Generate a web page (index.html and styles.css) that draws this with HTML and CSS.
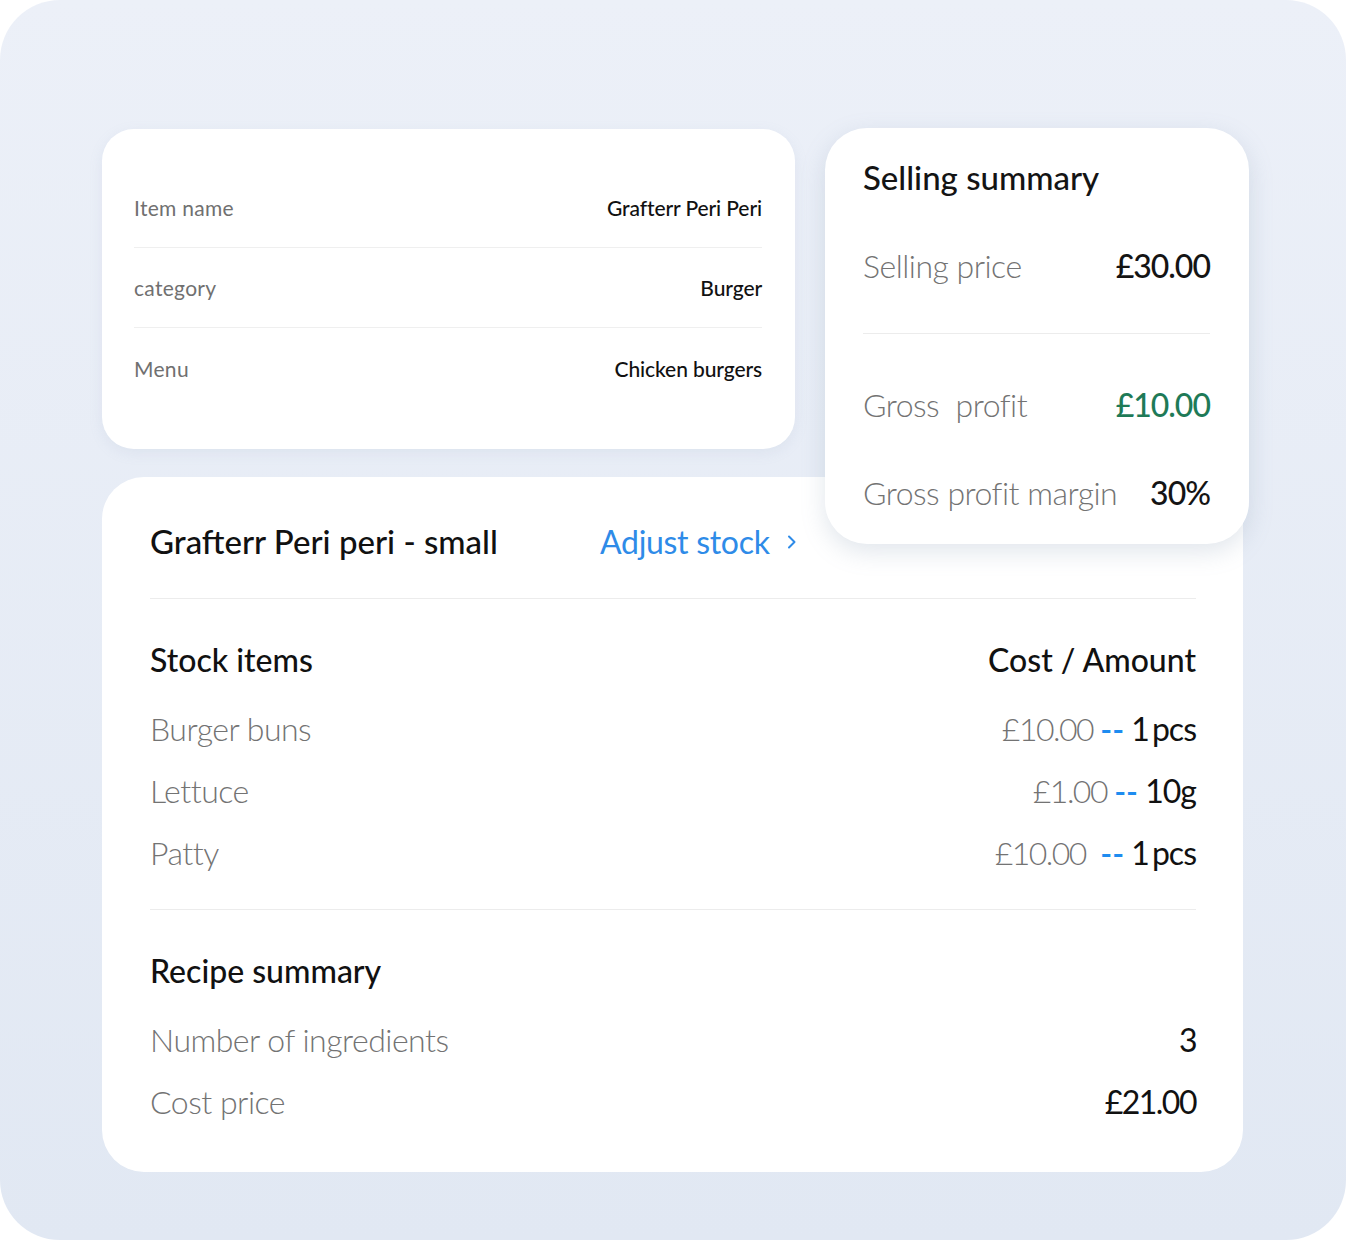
FILE: index.html
```html
<!DOCTYPE html>
<html lang="en">
<head>
<meta charset="utf-8">
<title>Item summary</title>
<link rel="stylesheet" href="styles.css">
</head>
<body>
<div class="panel">
  <div class="top-row">
    <section class="card info-card">
      <div class="info-row"><span class="info-label">Item name</span><span class="info-value">Grafterr Peri Peri</span></div>
      <div class="info-row"><span class="info-label">category</span><span class="info-value">Burger</span></div>
      <div class="info-row"><span class="info-label">Menu</span><span class="info-value">Chicken burgers</span></div>
    </section>
    <section class="card selling-card">
      <h2 class="selling-title">Selling summary</h2>
      <div class="sell-row sell-first"><span class="muted">Selling price</span><span class="strong">£30.00</span></div>
      <div class="sell-divider"></div>
      <div class="sell-row sell-gross"><span class="muted">Gross&nbsp; profit</span><span class="strong green">£10.00</span></div>
      <div class="sell-row sell-margin"><span class="muted">Gross profit margin</span><span class="strong">30%</span></div>
    </section>
  </div>
  <section class="card detail-card">
    <div class="detail-head">
      <h2 class="detail-title">Grafterr Peri peri - small</h2>
      <a class="adjust" href="#">Adjust stock
        <svg class="chev" width="12" height="16" viewBox="0 0 12 16"><path d="M3 2.5 L8.5 8 L3 13.5" fill="none" stroke="currentColor" stroke-width="2" stroke-linecap="round" stroke-linejoin="round"/></svg>
      </a>
    </div>
    <div class="detail-divider"></div>
    <div class="section-head"><h3>Stock items</h3><h3>Cost / Amount</h3></div>
    <div class="line"><span class="muted">Burger buns</span><span class="amount"><span class="muted num">£10.00</span> <span class="dash">--</span> 1&#8201;pcs</span></div>
    <div class="line"><span class="muted">Lettuce</span><span class="amount"><span class="muted num">£1.00</span> <span class="dash">--</span> 10g</span></div>
    <div class="line"><span class="muted">Patty</span><span class="amount"><span class="muted num">£10.00</span>&nbsp; <span class="dash">--</span> 1&#8201;pcs</span></div>
    <div class="detail-divider second"></div>
    <div class="section-head"><h3>Recipe summary</h3></div>
    <div class="line"><span class="muted">Number of ingredients</span><span class="dark">3</span></div>
    <div class="line"><span class="muted">Cost price</span><span class="dark">£21.00</span></div>
  </section>
</div>
</body>
</html>
```
FILE: styles.css
```css
* { box-sizing: border-box; }
html, body { margin: 0; padding: 0; }
body {
  background: #ffffff;
  font-family: "Lato", "Inter", sans-serif;
  color: #141414;
}
.panel {
  width: 1346px;
  height: 1240px;
  border-radius: 60px;
  background: linear-gradient(180deg, #ecf0f8 0%, #e1e8f3 100%);
  padding: 128px 0 0 102px;
}
.card {
  background: #ffffff;
}
.top-row {
  display: flex;
  align-items: flex-start;
  gap: 30px;
}
.info-card {
  width: 693px;
  margin-top: 1px;
  border-radius: 32px;
  padding: 39px 33px 41px 32px;
  box-shadow: 0 4px 14px rgba(140, 160, 190, 0.12);
}
.info-row {
  display: flex;
  justify-content: space-between;
  align-items: center;
  height: 80px;
  border-bottom: 1px solid #efefef;
}
.info-row:last-child { border-bottom: none; }
.info-label {
  font-size: 21px;
  color: #707070;
  font-weight: 400;
  letter-spacing: 0.3px;
}
.info-value {
  font-size: 21px;
  color: #111;
  font-weight: 500;
  letter-spacing: -0.1px;
}
.selling-card {
  position: relative;
  z-index: 2;
  width: 424px;
  margin-bottom: -96px;
  border-radius: 42px;
  padding: 28px 39px 31px 38px;
  box-shadow: 0 8px 24px rgba(120, 140, 170, 0.22);
}
.selling-title {
  margin: 0;
  font-size: 33px;
  font-weight: 500;
  line-height: 42px;
  color: #141414;
}
.sell-row {
  display: flex;
  justify-content: space-between;
  align-items: center;
  height: 42px;
}
.sell-first { margin-top: 46px; }
.sell-divider {
  height: 1px;
  background: #ececec;
  margin: 47px 0 0 0;
}
.sell-gross { margin-top: 49px; }
.sell-margin { margin-top: 46px; }
.muted {
  color: #737373;
  font-size: 32px;
  font-weight: 300;
  letter-spacing: -0.5px;
}
.strong {
  color: #141414;
  font-size: 32px;
  font-weight: 500;
  letter-spacing: -1px;
}
.green { color: #1e7a57; }
.detail-card {
  position: relative;
  z-index: 1;
  width: 1141px;
  margin-top: 28px;
  border-radius: 42px;
  padding: 41px 47px 40px 48px;
}
.detail-head {
  display: flex;
  align-items: center;
  height: 46px;
}
.detail-title {
  margin: 0;
  width: 450px;
  font-size: 33px;
  font-weight: 500;
  color: #111;
}
.adjust {
  display: flex;
  align-items: center;
  gap: 16px;
  color: #2e8be8;
  text-decoration: none;
  font-size: 32px;
  font-weight: 400;
  letter-spacing: -0.3px;
}
.chev { margin-top: 2px; }
.detail-divider {
  height: 1px;
  background: #ececec;
  margin-top: 34px;
}
.detail-divider.second { margin-top: 26px; }
.section-head {
  display: flex;
  justify-content: space-between;
  align-items: center;
  height: 46px;
  margin-top: 37px;
  margin-bottom: 15px;
}
.section-head h3 {
  margin: 0;
  font-size: 32px;
  font-weight: 500;
  color: #111;
}
.line {
  display: flex;
  justify-content: space-between;
  align-items: center;
  height: 62px;
}
.amount {
  font-size: 32px;
  font-weight: 400;
  color: #111;
  letter-spacing: -1px;
}
.num { letter-spacing: -1.5px; }
.dash {
  color: #1e8cf0;
  font-weight: 600;
  letter-spacing: 0;
}
.dark {
  font-size: 32px;
  color: #111;
  font-weight: 400;
  letter-spacing: -1.5px;
}
```
